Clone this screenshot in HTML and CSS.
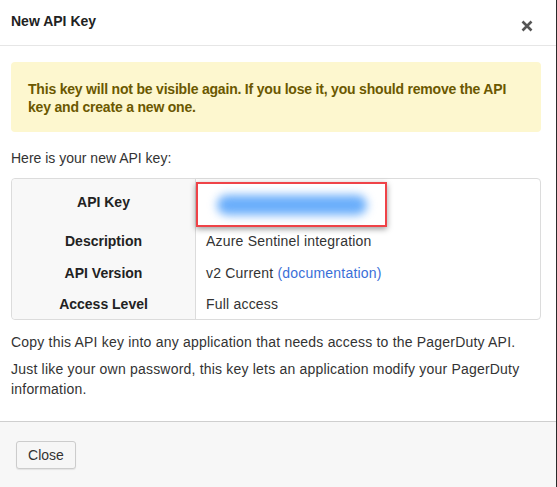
FILE: index.html
```html
<!DOCTYPE html>
<html>
<head>
<meta charset="utf-8">
<link rel="stylesheet" href="styles.css">
</head>
<body>
<div class="modal">
  <div class="header">
    <h1 class="title">New API Key</h1>
    <button class="close-x" aria-label="Close">
      <svg width="12" height="12" viewBox="0 0 12 12"><path d="M1.5 1.5 L10.5 10.5 M10.5 1.5 L1.5 10.5" stroke="#555" stroke-width="2.6" stroke-linecap="butt"/></svg>
    </button>
  </div>
  <div class="body">
    <div class="alert">This key will not be visible again. If you lose it, you should remove the API key and create a new one.</div>
    <p class="intro">Here is your new API key:</p>
    <table class="keytable">
      <tr class="row-key">
        <th>API Key</th>
        <td><span class="keybox"><span class="blur"></span></span></td>
      </tr>
      <tr>
        <th>Description</th>
        <td>Azure Sentinel integration</td>
      </tr>
      <tr>
        <th>API Version</th>
        <td>v2 Current <a class="doc" href="#">(documentation)</a></td>
      </tr>
      <tr class="row-last">
        <th>Access Level</th>
        <td>Full access</td>
      </tr>
    </table>
    <p class="note first">Copy this API key into any application that needs access to the PagerDuty API.</p>
    <p class="note">Just like your own password, this key lets an application modify your PagerDuty information.</p>
  </div>
  <div class="footer">
    <button class="btn">Close</button>
  </div>
</div>
</body>
</html>
```
FILE: styles.css
```css
html, body {
  margin: 0;
  padding: 0;
  background: #ffffff;
}
body {
  font-family: "Liberation Sans", Arial, sans-serif;
  font-size: 14px;
  color: #333333;
}
.modal {
  width: 556px;
  height: 487px;
  border-right: 1px solid #2a2a2a;
  display: flex;
  flex-direction: column;
}
.header {
  height: 45px;
  flex: none;
  border-bottom: 1px solid #e6e6e6;
  display: flex;
  align-items: flex-start;
  justify-content: space-between;
  padding: 0 23px 0 11px;
}
.title {
  margin: 13px 0 0;
  font-size: 14px;
  font-weight: bold;
  color: #222;
  line-height: 16px;
}
.close-x {
  margin-top: 20px;
  border: 0;
  background: none;
  padding: 0;
  width: 12px;
  height: 12px;
  display: flex;
}
.body {
  flex: 1;
  padding: 16px 15px 0 11px;
}
.alert {
  background: #fdf7cf;
  border-radius: 4px;
  padding: 18px 20px 16px 17px;
  font-weight: bold;
  color: #6b5800;
  line-height: 18px;
  letter-spacing: -0.2px;
}
.intro {
  margin: 17px 0 11px;
  line-height: 18px;
}
.keytable {
  width: 100%;
  border-collapse: separate;
  border-spacing: 0;
  border: 1px solid #dcdcdc;
  border-radius: 4px;
}
.keytable th {
  width: 183px;
  background: #f8f8f8;
  border-right: 1px solid #dcdcdc;
  font-weight: bold;
  text-align: center;
  height: 32px;
  padding: 0;
  color: #222;
}
.keytable tr:first-child th { border-top-left-radius: 4px; }
.keytable tr:last-child th { border-bottom-left-radius: 4px; }
.keytable td {
  padding: 0 0 0 10px;
  height: 32px;
  letter-spacing: 0.2px;
}
.keytable .row-key th,
.keytable .row-key td {
  height: 46px;
}
.keytable .row-last th,
.keytable .row-last td {
  height: 30px;
}
.keytable .row-key td {
  padding: 0;
  vertical-align: top;
}
.keybox {
  display: block;
  width: 187px;
  height: 41px;
  margin: 3px 0 -2px;
  border: 2px solid #ef4348;
  box-shadow: 0 2px 6px rgba(0,0,0,0.4);
  background: #ffffff;
  position: relative;
}
.blur {
  position: absolute;
  left: 19px;
  top: 11px;
  width: 150px;
  height: 20px;
  border-radius: 10px;
  background: #6aaefb;
  filter: blur(5px);
}
.doc {
  color: #3a6fd8;
  text-decoration: none;
}
.note {
  margin: 0;
  line-height: 20px;
  letter-spacing: 0.2px;
}
.note.first {
  margin: 12px 0 7px;
}
.footer {
  height: 66px;
  flex: none;
  box-sizing: border-box;
  border-top: 1px solid #cfcfcf;
  background: #f7f7f7;
  padding: 19px 16px 0;
}
.btn {
  width: 60px;
  height: 28px;
  border: 1px solid #cccccc;
  border-radius: 3px;
  background: #f6f6f6;
  box-shadow: 0 1px 1px rgba(0,0,0,0.08);
  font-family: "Liberation Sans", Arial, sans-serif;
  font-size: 14px;
  color: #333;
  padding: 0;
}
```
